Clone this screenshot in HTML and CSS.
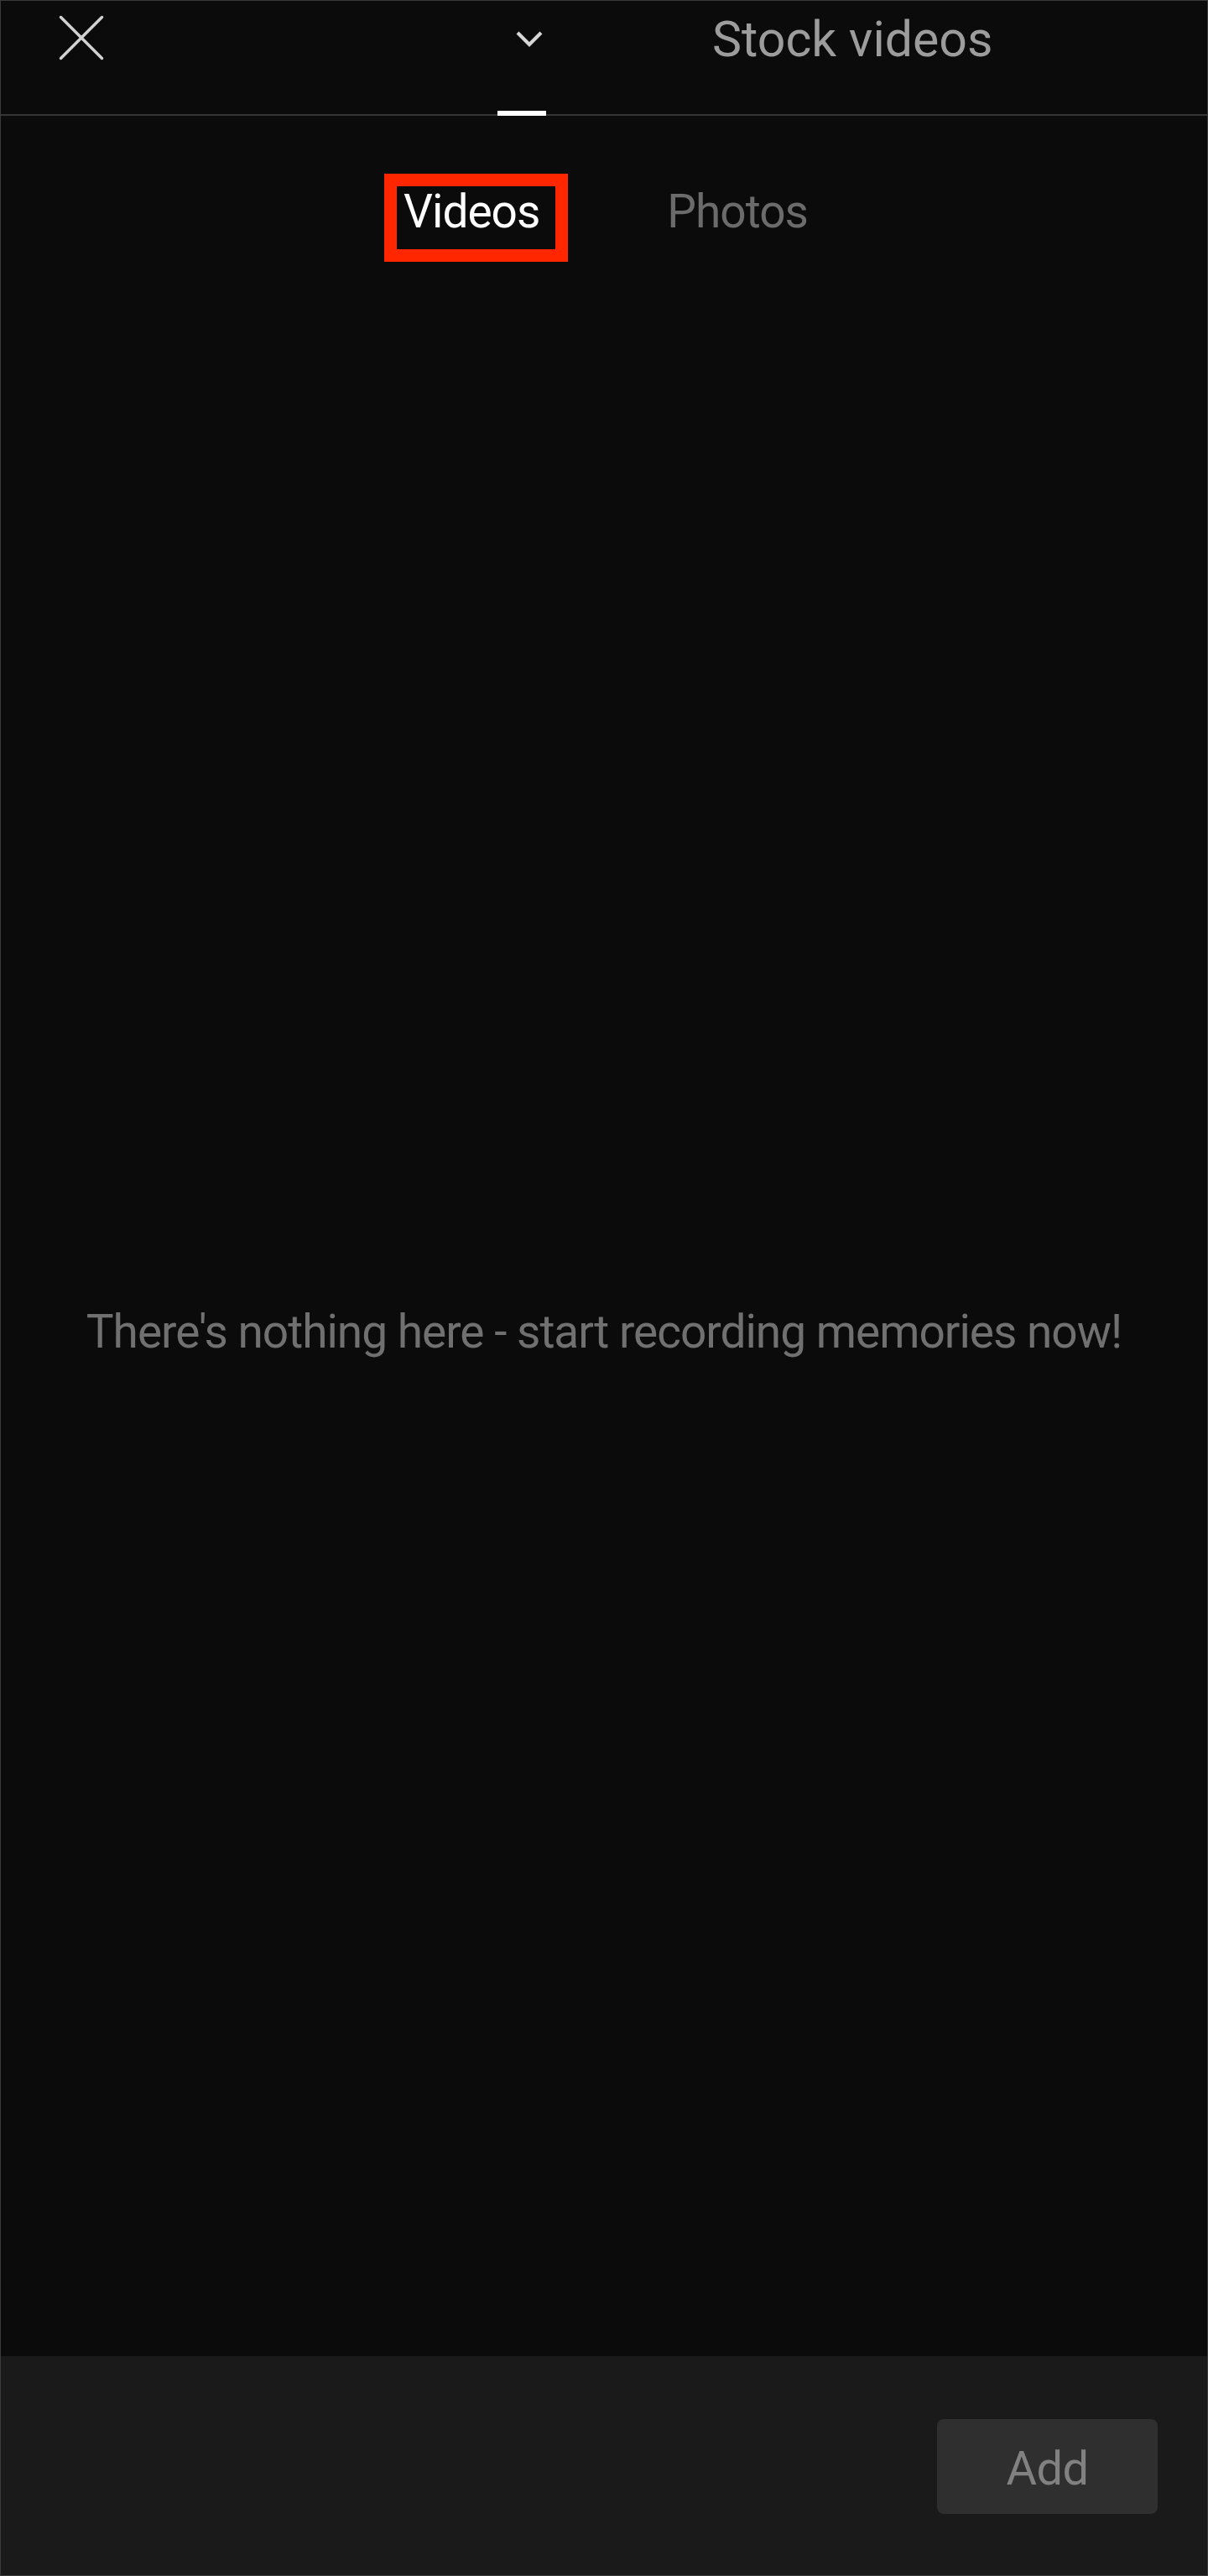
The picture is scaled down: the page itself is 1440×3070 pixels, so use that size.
FILE: index.html
```html
<!DOCTYPE html>
<html lang="en">
<head>
<meta charset="utf-8">
<title>Stock videos</title>
<link rel="stylesheet" href="styles.css">
</head>
<body>
<div class="screen">
  <header class="topbar">
    <button class="close" aria-label="Close">
      <svg width="56" height="56" viewBox="0 0 56 56"><path d="M3.5 3.5 L52.5 52.5 M52.5 3.5 L3.5 52.5" stroke="#d2d2d2" stroke-width="3.5" stroke-linecap="round" fill="none"/></svg>
    </button>
    <div class="tab tab-active">
      <svg class="chevron" width="34" height="24" viewBox="0 0 34 24"><polyline points="3,4 17,18 31,4" stroke="#d6d6d6" stroke-width="4.2" fill="none"/></svg>
    </div>
    <div class="tab tab-stock">Stock videos</div>
  </header>
  <nav class="subtabs">
    <span class="subtab subtab-active">Videos</span>
    <span class="subtab">Photos</span>
  </nav>
  <main class="empty">
    <p class="empty-text">There's nothing here - start recording memories now!</p>
  </main>
  <footer class="bottombar">
    <button class="add">Add</button>
  </footer>
</div>
</body>
</html>
```
FILE: styles.css
```css
*, *::before, *::after { box-sizing: border-box; }
html, body { margin: 0; padding: 0; background: #0b0b0b; }
body { font-family: Roboto, "Liberation Sans", sans-serif; }

.screen {
  width: 1440px;
  height: 3070px;
  border: 1px solid #3a3a3a;
  background: #0b0b0b;
  display: flex;
  flex-direction: column;
}

.topbar {
  height: 137px;
  flex: none;
  border-bottom: 2px solid #353535;
  display: flex;
  align-items: flex-start;
}

.close {
  margin: 16px 0 0 68px;
  padding: 0;
  border: 0;
  background: none;
  width: 56px;
  height: 56px;
  display: block;
}
.close svg { display: block; }

.tab-active {
  position: relative;
  width: 58px;
  align-self: stretch;
  margin-left: 468px;
}
.tab-active .chevron {
  display: block;
  margin: 34px 0 0 21px;
}
.tab-active::after {
  content: "";
  position: absolute;
  left: 0;
  right: 0;
  bottom: -2px;
  height: 6px;
  background: #ffffff;
}

.tab-stock {
  margin: 16px 0 0 198px;
  font-size: 59px;
  line-height: 59px;
  color: #9c9c9c;
  white-space: nowrap;
}

.subtabs {
  flex: none;
  display: flex;
  padding: 87px 0 0 480px;
  gap: 152px;
}
.subtab {
  font-size: 55px;
  line-height: 55px;
  letter-spacing: -1px;
  color: #6b6b6b;
  white-space: nowrap;
}
.subtab-active {
  color: #ffffff;
  position: relative;
}
.subtab-active::after {
  content: "";
  position: absolute;
  left: -23px;
  top: -18px;
  width: 219px;
  height: 105px;
  border: 15px solid #ff2600;
}

.empty {
  flex: 1;
  padding-top: 1280px;
}
.empty-text {
  margin: 0;
  text-align: center;
  font-size: 55px;
  line-height: 55px;
  letter-spacing: -1px;
  color: #707070;
}

.bottombar {
  flex: none;
  height: 261px;
  background: #1a1a1a;
  display: flex;
  justify-content: flex-end;
  align-items: flex-start;
  padding: 75px 59px 0 0;
}
.add {
  width: 263px;
  height: 113px;
  border: 0;
  border-radius: 8px;
  background: #2f2f2f;
  color: #818181;
  font-family: Roboto, "Liberation Sans", sans-serif;
  font-size: 56px;
  line-height: 56px;
  letter-spacing: -0.5px;
  padding: 5px 0 0;
  display: flex;
  align-items: center;
  justify-content: center;
}
```
